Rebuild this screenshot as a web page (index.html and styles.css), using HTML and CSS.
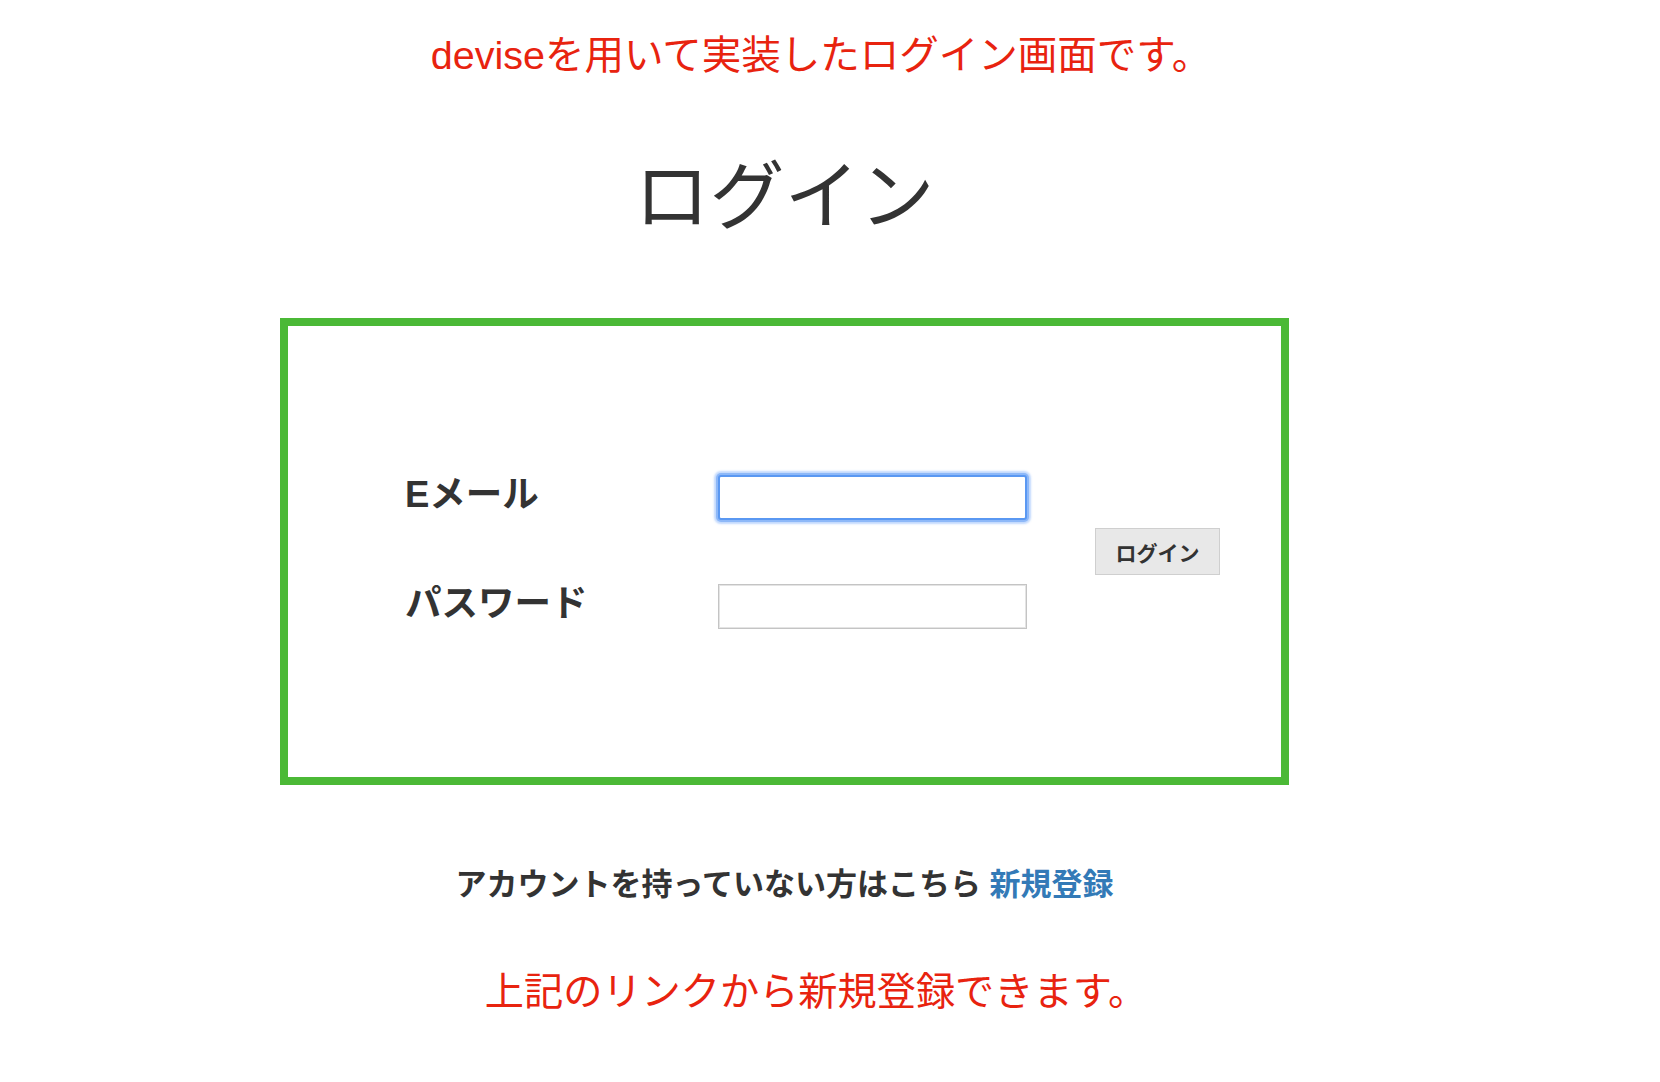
FILE: index.html
```html
<!DOCTYPE html>
<html lang="ja">
<head>
<meta charset="utf-8">
<title>ログイン</title>
<link rel="stylesheet" href="styles.css">
</head>
<body>
<p class="note note-top">deviseを用いて実装したログイン画面です。</p>
<main class="main">
  <h1 class="title">ログイン</h1>
  <section class="login-box">
    <form class="login-form">
      <label class="field-label" for="email">Eメール</label>
      <input class="field-input field-input--focus" id="email" type="email">
      <label class="field-label" for="password">パスワード</label>
      <input class="field-input" id="password" type="password">
      <button class="login-btn" type="button">ログイン</button>
    </form>
  </section>
  <p class="signup">アカウントを持っていない方はこちら <a class="signup-link" href="#">新規登録</a></p>
</main>
<p class="note note-bottom">上記のリンクから新規登録できます。</p>
</body>
</html>
```
FILE: styles.css
```css
html, body {
  margin: 0;
  padding: 0;
  background: #ffffff;
}

body {
  font-family: "Liberation Sans", "Noto Sans CJK JP", sans-serif;
  color: #333333;
}

.note {
  margin: 0;
  text-align: center;
  color: #e8230f;
  line-height: 50px;
  font-weight: 400;
}

.note-top {
  width: 1642px;
  font-size: 39.5px;
  padding-top: 30px;
}

.note-bottom {
  width: 1632px;
  font-size: 39.2px;
  margin-top: 62px;
}

.main {
  width: 1009px;
  margin-left: 280px;
}

.title {
  margin: 72px 0 0;
  text-align: center;
  font-size: 75px;
  line-height: 90px;
  font-weight: 400;
  color: #333333;
}

.login-box {
  box-sizing: border-box;
  margin-top: 76px;
  height: 467px;
  border: 8px solid #4bb936;
  display: flex;
  align-items: center;
  padding-left: 117px;
}

.login-form {
  display: grid;
  grid-template-columns: 313px 309px auto;
  grid-template-rows: 45px 45px;
  row-gap: 64px;
  align-items: center;
}

.field-label {
  font-size: 36.5px;
  font-weight: 700;
  line-height: 40px;
  margin-bottom: 4px;
  color: #333333;
}

.field-input {
  box-sizing: border-box;
  width: 309px;
  height: 45px;
  margin: 0;
  border: 1px solid #c4c4c4;
  box-shadow: inset 0 0 0 1px #e4e4e4;
  background: #ffffff;
  outline: none;
}

.field-input--focus {
  border: 2px solid #5a98f2;
  box-shadow: 0 0 0 2px #8db8f8, 0 0 2px 4px rgba(120, 170, 250, 0.45);
  border-radius: 3px;
}

.login-btn {
  grid-column: 3;
  grid-row: 1 / span 2;
  align-self: center;
  margin-left: 68px;
  box-sizing: border-box;
  width: 125px;
  height: 47px;
  padding: 0;
  background: #e8e8e8;
  border: 1px solid #cfcfcf;
  border-radius: 0;
  font-family: "Liberation Sans", "Noto Sans CJK JP", sans-serif;
  font-size: 21px;
  font-weight: 700;
  color: #333333;
}

.signup {
  margin: 80px 0 0;
  text-align: center;
  font-size: 31px;
  line-height: 40px;
  font-weight: 700;
  color: #333333;
}

.signup-link {
  color: #337ab7;
  text-decoration: none;
}
```
